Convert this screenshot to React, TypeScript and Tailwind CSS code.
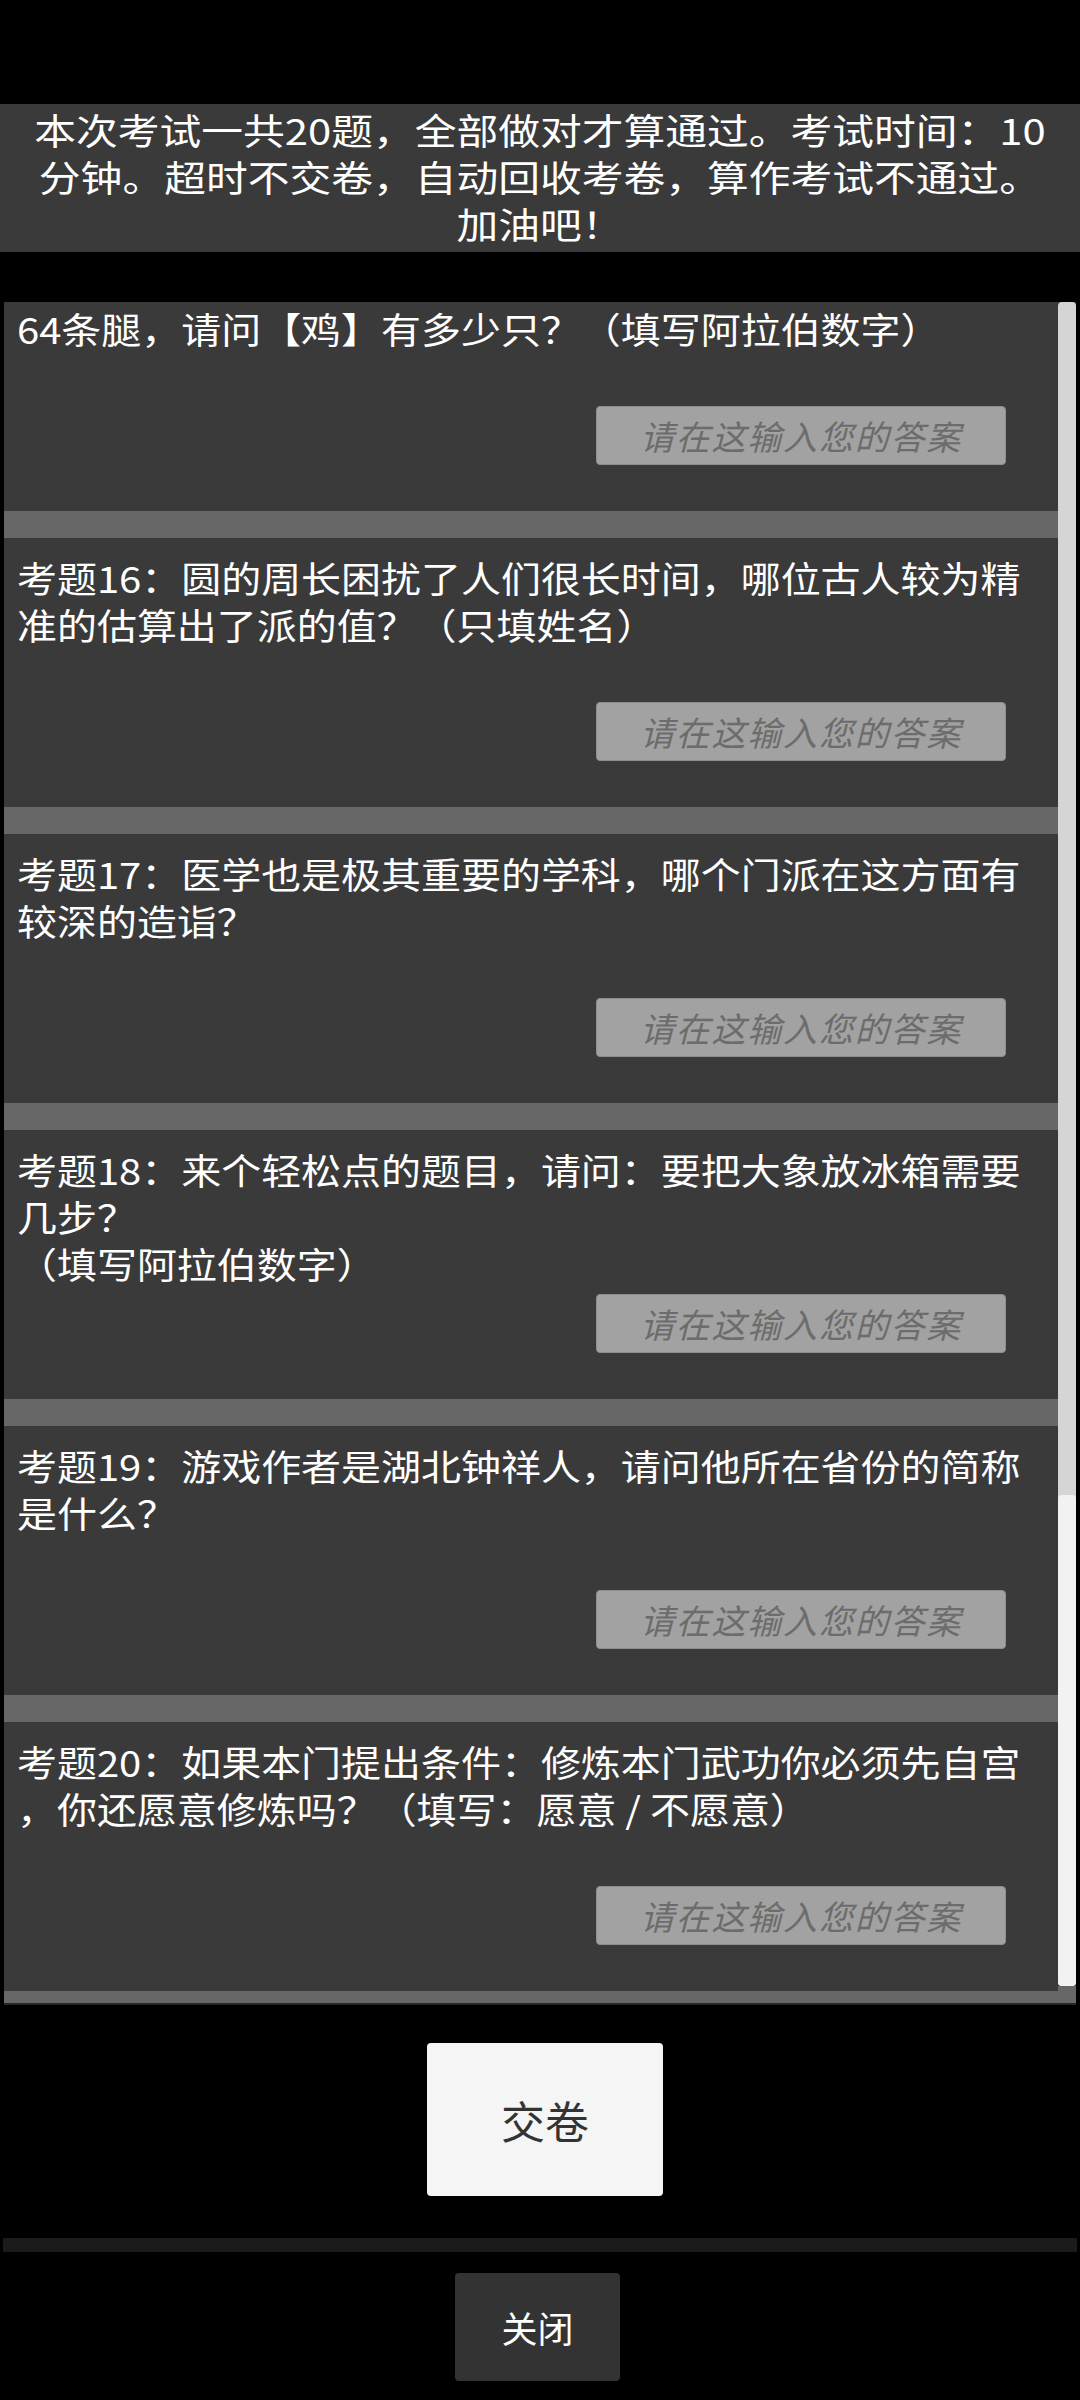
import React from "react";

type Q = { lines: string[] };

const questions: Q[] = [
  { lines: ["考题15：一个笼子里有若干只鸡和兔，共有20个头，", "64条腿，请问【鸡】有多少只？（填写阿拉伯数字）"] },
  { lines: ["考题16：圆的周长困扰了人们很长时间，哪位古人较为精", "准的估算出了派的值？（只填姓名）"] },
  { lines: ["考题17：医学也是极其重要的学科，哪个门派在这方面有", "较深的造诣？"] },
  { lines: ["考题18：来个轻松点的题目，请问：要把大象放冰箱需要", "几步？", "（填写阿拉伯数字）"] },
  { lines: ["考题19：游戏作者是湖北钟祥人，请问他所在省份的简称", "是什么？"] },
  { lines: ["考题20：如果本门提出条件：修炼本门武功你必须先自宫", "，你还愿意修炼吗？（填写：愿意 / 不愿意）"] },
];

function Item({ q }: { q: Q }) {
  return (
    <div className="flex flex-col">
      <div className="h-[269px] bg-[#3a3a3a] flex flex-col pt-[16px] pl-[13px]">
        <div className="text-white text-[36px] leading-[47px]">
          {q.lines.map((l, i) => (
            <div key={i} className="whitespace-nowrap origin-left scale-x-[1.11]">
              {l}
            </div>
          ))}
        </div>
        <div className="mt-auto mb-[46px] self-end mr-[52px] w-[410px] h-[59px] bg-[#a2a2a2] border border-[#8e8e8e] rounded-[4px] flex items-center justify-center">
          <span className="italic text-[#6c6c6c] text-[34px] tracking-[1.8px] leading-none">
            请在这输入您的答案
          </span>
        </div>
      </div>
      <div className="h-[27px] bg-[#676767]" />
    </div>
  );
}

export default function App() {
  return (
    <div className="w-[1080px] h-[2400px] bg-black flex flex-col font-['Noto_Sans_CJK_SC','Noto_Sans',sans-serif] overflow-hidden">
      <div className="h-[104px] shrink-0" />
      <div className="h-[148px] shrink-0 bg-[#3a3a3a] pt-[2px] text-white text-[36px] leading-[47px] text-center">
        <div className="whitespace-nowrap scale-x-[1.16]">本次考试一共20题，全部做对才算通过。考试时间：10</div>
        <div className="whitespace-nowrap scale-x-[1.16]">分钟。超时不交卷，自动回收考卷，算作考试不通过。</div>
        <div className="whitespace-nowrap scale-x-[1.16]">加油吧！</div>
      </div>
      <div className="h-[50px] shrink-0" />
      <div className="ml-[4px] w-[1072px] h-[1703px] shrink-0 bg-[#3a3a3a] border-b-2 border-[#262626] flex overflow-hidden">
        <div className="w-[1054px] overflow-hidden">
          <div className="mt-[-60px] flex flex-col">
            {questions.map((q, i) => (
              <Item key={i} q={q} />
            ))}
          </div>
        </div>
        <div className="w-[18px] flex flex-col">
          <div className="h-[1684px] bg-[#d5d5d5] rounded-[4px] flex flex-col justify-end">
            <div className="h-[491px] bg-[#f2f2f2] rounded-[4px]" />
          </div>
          <div className="flex-1 bg-[#676767]" />
        </div>
      </div>
      <div className="h-[38px] shrink-0" />
      <div className="flex justify-center pl-[10px] shrink-0">
        <div className="w-[236px] h-[153px] bg-[#f5f5f5] rounded-[4px] flex items-center justify-center text-[#333333] text-[44px] leading-none">
          交卷
        </div>
      </div>
      <div className="h-[42px] shrink-0" />
      <div className="mx-[3px] h-[14px] bg-[#1b1b1b] shrink-0" />
      <div className="h-[21px] shrink-0" />
      <div className="flex justify-center pr-[5px] shrink-0">
        <div className="w-[165px] h-[108px] bg-[#333333] rounded-[4px] flex items-center justify-center text-white text-[36px] leading-none">
          关闭
        </div>
      </div>
    </div>
  );
}
